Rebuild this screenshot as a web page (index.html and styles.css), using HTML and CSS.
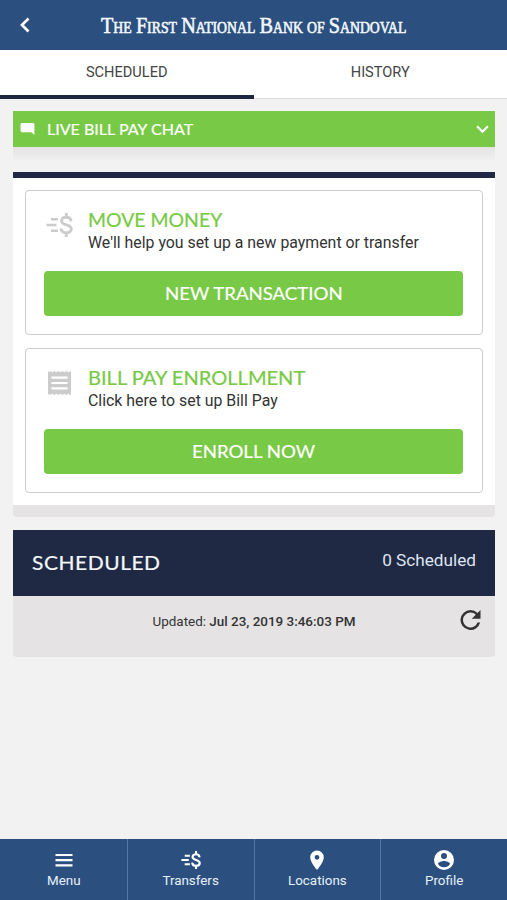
FILE: index.html
```html
<!DOCTYPE html>
<html lang="en">
<head>
<meta charset="utf-8">
<title>Bill Pay</title>
<link rel="stylesheet" href="styles.css">
</head>
<body>
<svg width="0" height="0" class="defs" aria-hidden="true">
  <symbol id="money" viewBox="0 0 27 24">
    <path d="M5 6.200h7M.5 12h10M5 17.800h7" fill="none" stroke="currentColor" stroke-width="2.600"/>
    <path d="M25 8.400C24.800 5.700 23 4.300 20.300 4.300c-2.800 0-4.700 1.400-4.700 3.700 0 5.100 9.700 2.800 9.700 8 0 2.300-2.100 3.800-5 3.800-3 0-5-1.500-5.200-4.300M20.300 0v4.500M20.300 19.500V24" fill="none" stroke="currentColor" stroke-width="2.900"/>
  </symbol>
</svg>
<header class="topbar">
  <svg class="back" viewBox="0 0 10 16"><path d="M8.500 1.500 2 8l6.500 6.500" fill="none" stroke="#fff" stroke-width="2.700"/></svg>
  <h1 class="bank">The First National Bank of Sandoval</h1>
</header>
<nav class="tabs">
  <a class="tab active">SCHEDULED</a>
  <a class="tab">HISTORY</a>
</nav>
<main class="content">
  <section class="chat">
    <div class="chat-bar">
      <svg class="bubble" viewBox="0 0 15 13"><path d="M1.500 0h12A1.500 1.500 0 0 1 15 1.500V13l-3.500-3h-10A1.500 1.500 0 0 1 0 8.500v-7A1.500 1.500 0 0 1 1.500 0z" fill="#fff"/></svg>
      <span class="chat-title wide">LIVE BILL PAY CHAT</span>
      <svg class="chevron" viewBox="0 0 12 8"><path d="M1 1l5 5 5-5" fill="none" stroke="#fff" stroke-width="2"/></svg>
    </div>
    <div class="chat-foot"></div>
  </section>
  <section class="panel">
    <article class="card">
      <div class="card-head">
        <svg class="card-icon"><use href="#money"/></svg>
        <div>
          <h2 class="card-title wide">MOVE MONEY</h2>
          <p class="card-text">We'll help you set up a new payment or transfer</p>
        </div>
      </div>
      <button class="btn"><span class="wide">NEW TRANSACTION</span></button>
    </article>
    <article class="card">
      <div class="card-head">
        <svg class="card-icon" viewBox="0 0 27 24"><path d="M2 0l1.200 1.200L4.400 0l2 1.200L8.400 0l2 1.200L12.400 0l2 1.200L16.400 0l2 1.200L20.400 0l2 1.200L25 0v24l-2.600-1.200-2 1.200-2-1.200-2 1.200-2-1.200-2 1.200-2-1.200-2 1.200-2-1.200-2 1.200-1.200-1.200L2 24z" fill="currentColor"/><path d="M5.500 6.700h16M5.500 12h16M5.500 17.300h16" stroke="#fff" stroke-width="2.200"/></svg>
        <div>
          <h2 class="card-title wide enrollment">BILL PAY ENROLLMENT</h2>
          <p class="card-text">Click here to set up Bill Pay</p>
        </div>
      </div>
      <button class="btn"><span class="wide">ENROLL NOW</span></button>
    </article>
  </section>
  <section class="summary">
    <div class="summary-head">
      <h2 class="summary-title wide">SCHEDULED</h2>
      <span class="count">0 Scheduled</span>
    </div>
    <div class="summary-foot">
      <p class="updated">Updated: <b>Jul 23, 2019 3:46:03 PM</b></p>
      <svg class="refresh" viewBox="4 4 16 16"><path d="M17.650 6.350A7.958 7.958 0 0 0 12 4a8 8 0 1 0 7.730 10h-2.080A6 6 0 1 1 12 6c1.660 0 3.140.690 4.220 1.780L13 11h7V4z" fill="#333"/></svg>
    </div>
  </section>
</main>
<nav class="bottom">
  <a class="item"><svg class="nav-icon" viewBox="0 0 20 20"><path d="M1.500 5h17M1.500 10.200h17M1.500 15.400h17" stroke="#fff" stroke-width="2.200"/></svg>Menu</a>
  <a class="item"><svg class="nav-icon"><use href="#money"/></svg>Transfers</a>
  <a class="item"><svg class="nav-icon" viewBox="2 2 20 20"><path d="M12 2.500a6.800 6.800 0 0 0-6.800 6.800C5.200 14.500 12 22 12 22s6.800-7.500 6.800-12.700A6.800 6.800 0 0 0 12 2.500zm0 9.200a2.400 2.400 0 1 1 0-4.800 2.400 2.400 0 0 1 0 4.800z" fill="#fff"/></svg>Locations</a>
  <a class="item"><svg class="nav-icon" viewBox="2 2 20 20"><path d="M12 2a10 10 0 1 0 0 20 10 10 0 0 0 0-20zm0 3a3 3 0 1 1 0 6 3 3 0 0 1 0-6zm0 14.200a7.200 7.200 0 0 1-6-3.220c.030-1.990 4-3.080 6-3.080s5.970 1.090 6 3.080a7.200 7.200 0 0 1-6 3.220z" fill="#fff"/></svg>Profile</a>
</nav>
</body>
</html>
```
FILE: styles.css
```css
* { box-sizing: border-box; }
body {
  margin: 0;
  height: 900px;
  display: flex;
  flex-direction: column;
  background: #f2f2f2;
  color: #333;
  font-family: Roboto, sans-serif;
  overflow: hidden;
}
h1, h2, p { margin: 0; font-weight: 400; }
svg { display: block; flex: none; }
.defs { position: absolute; }

.topbar {
  height: 50px;
  background: #2b5080;
  display: flex;
  align-items: center;
  padding-left: 20px;
}
.back { width: 10px; height: 16px; margin-right: 71px; }
.bank {
  font: 400 23.500px/28px "Liberation Serif", serif;
  font-variant: small-caps;
  -webkit-text-stroke: .6px #f4f8fc;
  color: #f4f8fc;
  white-space: nowrap;
  word-spacing: -1px;
  transform: scaleX(.860);
  transform-origin: left;
}

.tabs {
  height: 49px;
  background: #fff;
  display: grid;
  grid-template-columns: 1fr 1fr;
  border-bottom: 1px solid #ddd;
}
.tab {
  font-size: 14.600px;
  line-height: 44px;
  text-align: center;
  color: #444;
}
.tab.active { border-bottom: 4px solid #1f2740; margin-bottom: -1px; }

.content { flex: 1; padding: 12px 12px 0 13px; }
.wide {
  font-family: Lato, sans-serif;
  display: inline-block;
  white-space: nowrap;
  -webkit-text-stroke: .2px currentColor;
  transform: scaleX(1.070);
  transform-origin: left;
}
.chat-bar {
  height: 36px;
  background: #78c945;
  display: flex;
  align-items: center;
  padding: 0 6px 0 7px;
}
.bubble { width: 15px; height: 12px; }
.chat-title { color: #fff; font-size: 15px; line-height: 18px; margin: -1px auto 0 12px; }
.chevron { width: 13px; height: 9px; }
.chat-foot { height: 13px; background: linear-gradient(#e5e3e3, #f0f0f0); }

.panel {
  margin-top: 12px;
  height: 345px;
  border-top: 6px solid #1f2943;
  border-bottom: 12px solid #e5e3e3;
  border-radius: 0 0 4px 4px;
  background: #fff;
  padding: 12px;
  display: flex;
  flex-direction: column;
  gap: 13px;
}
.card {
  height: 145px;
  flex: none;
  border: 1px solid #ccc;
  border-radius: 4px;
  padding: 18px 19px 0 18px;
}
.card-head { height: 62px; display: flex; }
.card-icon { width: 27px; height: 24px; margin: 4px 15px 0 2px; color: #ccc; }
.card-title { display: block; color: #78c945; font-size: 18.500px; line-height: 23px; transform: scaleX(1.050); }
.enrollment { transform: scaleX(1.085); }
.card-text { font-size: 15.870px; line-height: 22px; }
.btn {
  display: flex;
  align-items: center;
  justify-content: center;
  width: 100%;
  height: 45px;
  border: 0;
  border-radius: 4px;
  background: #78c945;
  color: #fff;
  font-size: 18px;
  padding: 0 0 2px;
}
.btn .wide { transform: scaleX(1.035); transform-origin: center; }

.summary { margin-top: 13px; }
.summary-head {
  height: 66px;
  background: #1f2943;
  color: #f4f8fc;
  display: flex;
  align-items: center;
  justify-content: space-between;
  padding: 0 19px;
}
.summary-title { font-size: 20px; margin-top: -2px; letter-spacing: .5px; transform: scaleX(1.050); }
.count { font-size: 17.200px; margin-top: -7px; color: #dfe5f0; }
.summary-foot {
  height: 61px;
  background: #e5e3e3;
  border-radius: 0 0 4px 4px;
  display: grid;
  grid-template-columns: 35px 1fr 35px;
  padding-top: 14px;
}
.updated { grid-column: 2; font-size: 13.450px; line-height: 24px; text-align: center; }
.updated b { font-weight: 500; }
.refresh { width: 21px; height: 20px; }

.bottom {
  height: 61px;
  background: #2b5080;
  display: grid;
  grid-template-columns: repeat(4, 1fr);
}
.item {
  display: flex;
  flex-direction: column;
  align-items: center;
  padding-top: 11px;
  color: #e8f0f8;
  font-size: 13.400px;
  line-height: 22px;
  border-left: 1px solid #5377a2;
}
.item:first-child { border-left-color: transparent; }
.nav-icon { width: 20px; height: 20px; color: #fff; }
```
